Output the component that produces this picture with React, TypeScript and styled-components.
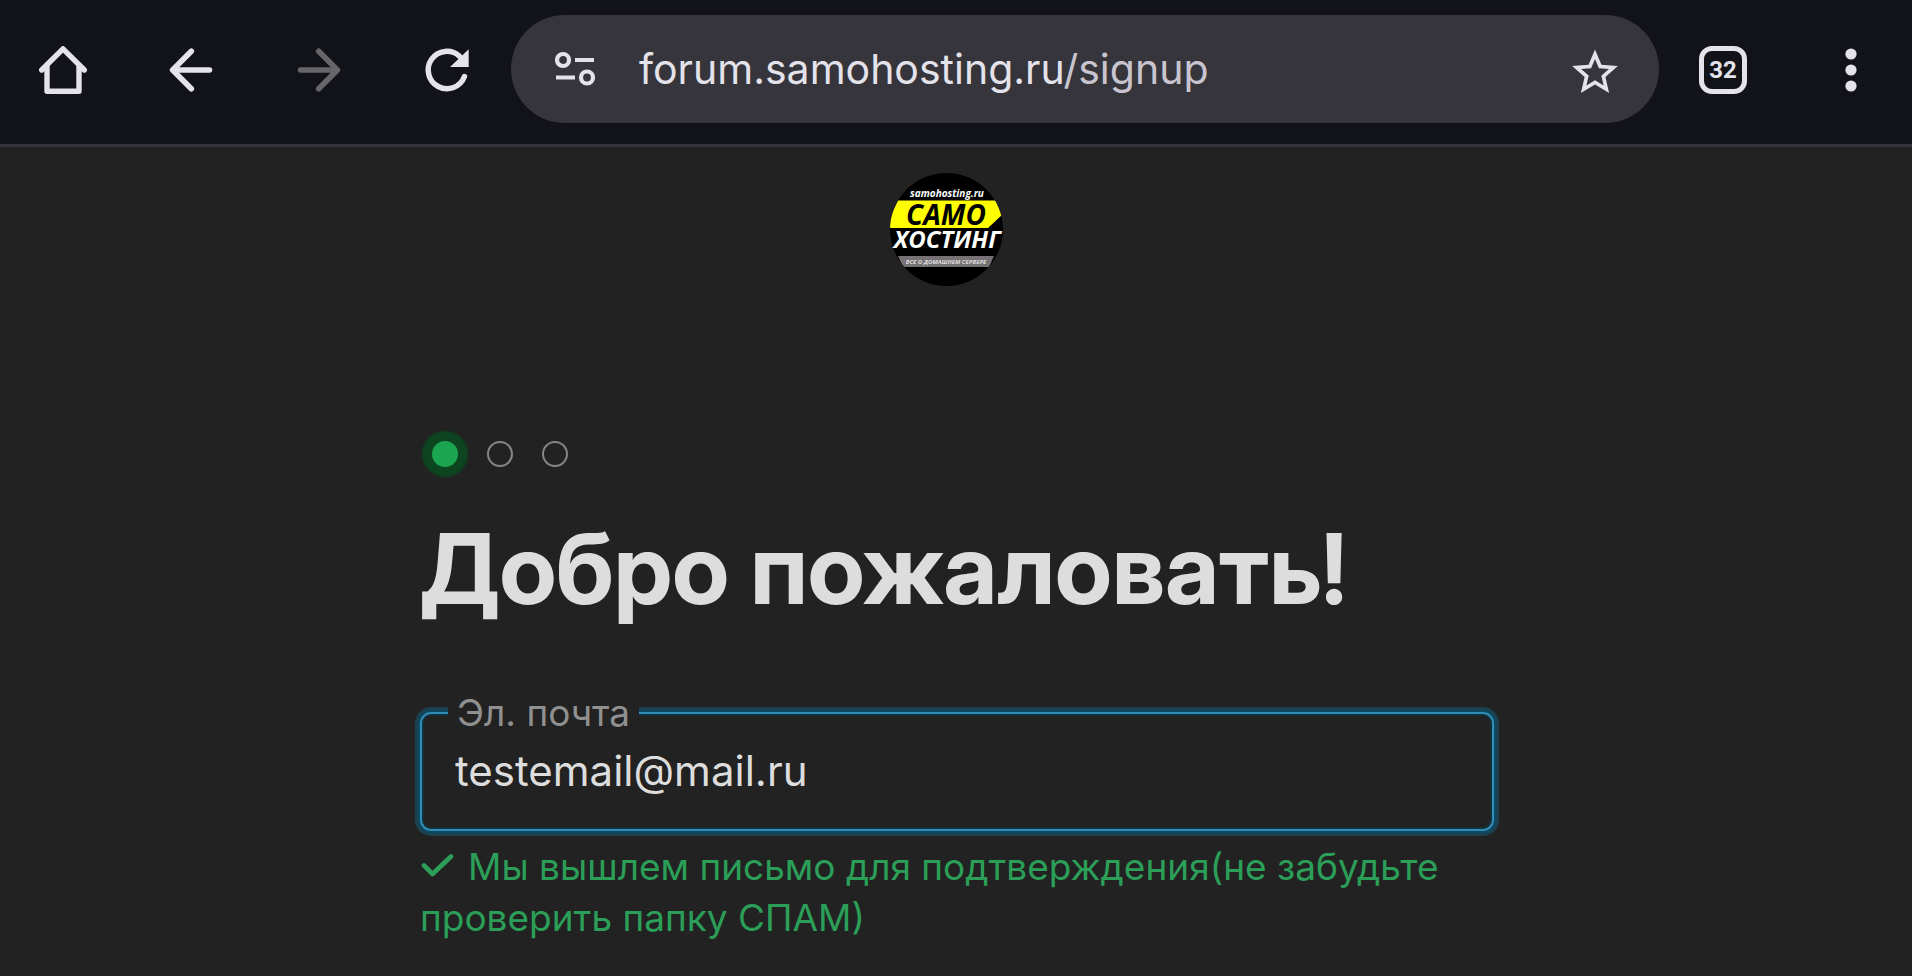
import React, { useState } from "react";
import styled, { createGlobalStyle } from "styled-components";

const color = {
  chrome: "#121318",
  pill: "#36353b",
  icon: "#e4e2ea",
  iconOff: "#65656a",
  urlPath: "#c8c5d0",
  page: "#222222",
  text: "#dddddd",
  muted: "#909090",
  green: "#1ca551",
  greenGlow: "#0d4520",
  focus: "#308fb8",
};

const GlobalStyle = createGlobalStyle`
  * { box-sizing: border-box; }
  body {
    margin: 0;
    background: ${color.page};
    color: ${color.text};
    font-family: Inter, "Liberation Sans", sans-serif;
  }
`;

const Toolbar = styled.header`
  display: flex;
  align-items: center;
  gap: 40px;
  padding: 15px 37px 21px 39px;
  background: ${color.chrome};
  border-bottom: 3px solid ${color.pill};
`;

const ToolGroup = styled.div`
  display: flex;
  align-items: center;
  gap: 80px;
  padding-top: 2px;
`;

const IconButton = styled.button`
  display: flex;
  align-items: center;
  justify-content: center;
  width: 48px;
  height: 48px;
  padding: 0;
  border: 0;
  background: none;
  color: ${color.icon};
  cursor: pointer;

  &:disabled {
    color: ${color.iconOff};
    cursor: default;
  }
`;

const TabsButton = styled(IconButton)`
  border: 5px solid ${color.icon};
  border-radius: 13px;
  font: 700 24px/24px Roboto, sans-serif;
`;

const AddressBar = styled.div`
  display: flex;
  flex: 1;
  align-items: center;
  gap: 44px;
  height: 108px;
  padding: 0 41px 0 44px;
  border-radius: 54px;
  background: ${color.pill};
`;

const PillButton = styled(IconButton)<{ $width: number }>`
  width: ${(p) => p.$width}px;
`;

const Address = styled.div`
  flex: 1;
  color: ${color.icon};
  font-size: 41px;
  line-height: 52px;
  white-space: nowrap;
  outline: none;
`;

const AddressPath = styled.span`
  color: ${color.urlPath};
`;

const SiteHeader = styled.div`
  display: flex;
  justify-content: center;
  padding: 26px 19px 0 0;
`;

const LogoLink = styled.a`
  display: block;
  height: 113px;
`;

const Main = styled.main`
  width: 100%;
  max-width: 1076px;
  margin: 0 auto;
  padding: 155px 0 0 2px;
`;

const Steps = styled.ol`
  display: flex;
  gap: 29px;
  margin: 0;
  padding: 0 12px;
  list-style: none;
`;

const Step = styled.li<{ $active?: boolean }>`
  width: 26px;
  height: 26px;
  border-radius: 50%;
  border: 2px solid ${(p) => (p.$active ? color.green : "#858585")};
  background: ${(p) => (p.$active ? color.green : "transparent")};
  box-shadow: ${(p) => (p.$active ? `0 0 2px 10px ${color.greenGlow}` : "none")};
`;

const Title = styled.h1`
  margin: 42px 0 83px;
  font-family: "Inter Display", Inter, sans-serif;
  font-size: 98px;
  line-height: 120px;
  font-weight: 700;
`;

const Field = styled.div`
  position: relative;
`;

const Label = styled.label`
  position: absolute;
  top: -17px;
  left: 28px;
  padding: 0 9px;
  background: ${color.page};
  color: ${color.muted};
  font-size: 37px;
  line-height: 36px;
`;

const EmailInput = styled.input`
  display: block;
  width: 100%;
  height: 119px;
  padding: 0 33px 2px;
  border: 2px solid ${color.focus};
  border-radius: 11px;
  outline: none;
  background: transparent;
  box-shadow: 0 0 0 2px #0d4a66, 0 0 0 5px #1c404e, inset 0 0 0 2px #163039;
  color: ${color.text};
  font: 400 42px/52px Inter, sans-serif;
`;

const Hint = styled.p`
  margin: 10px 0 0;
  color: #2b9f58;
  font-size: 37px;
  line-height: 51px;
`;

const CheckIcon = styled.svg`
  margin-right: 14px;
`;

const HomeIcon = () => (
  <svg width="48" height="48" viewBox="0 0 48 48" fill="none" stroke="currentColor" strokeWidth="5.4" strokeLinecap="round" strokeLinejoin="round">
    <path d="M2.7 24 24 2.8 45.3 24" />
    <path d="M8 20V45.3H40V20" />
  </svg>
);

const ArrowIcon = ({ forward = false }: { forward?: boolean }) => (
  <svg width="48" height="48" viewBox="0 0 48 48" fill="none" stroke="currentColor" strokeWidth="5.6" strokeLinecap="round" strokeLinejoin="round">
    <path d={forward ? "M23.7 5.3 42.4 24 23.7 42.7M5.5 24H42" : "M24.3 5.3 5.6 24 24.3 42.7M42.5 24H6"} />
  </svg>
);

const ReloadIcon = () => (
  <svg width="48" height="48" viewBox="0 0 48 48">
    <path d="M41.4 30.6A18.7 18.7 0 1 1 36.5 10.2" fill="none" stroke="currentColor" strokeWidth="5.5" strokeLinecap="round" />
    <path d="M45.7 3.3V21H27Z" fill="currentColor" />
  </svg>
);

const SiteInfoIcon = () => (
  <svg width="40" height="36" viewBox="0 0 40 36" fill="none" stroke="currentColor" strokeWidth="4.2">
    <circle cx="8" cy="9" r="6" />
    <path d="M20 9H39M1 26.5H20" />
    <circle cx="32" cy="26.5" r="6" />
  </svg>
);

const StarIcon = () => (
  <svg width="46" height="48" viewBox="2 0 20 21" fill="currentColor">
    <path d="M22 9.24l-7.19-.62L12 2 9.19 8.63 2 9.24l5.46 4.73L5.82 21 12 17.27 18.18 21l-1.63-7.03L22 9.24zM12 15.4l-3.76 2.27 1-4.28-3.32-2.88 4.38-.38L12 6.1l1.71 4.04 4.38.38-3.32 2.88 1 4.28L12 15.4z" />
  </svg>
);

const MenuIcon = () => (
  <svg width="48" height="48" viewBox="0 0 48 48" fill="currentColor">
    <circle cx="24" cy="8" r="5.6" />
    <circle cx="24" cy="24" r="5.6" />
    <circle cx="24" cy="40" r="5.6" />
  </svg>
);

const Logo = () => (
  <svg width="113" height="113" viewBox="0 0 113 113" fontFamily='"Open Sans", sans-serif' fontStyle="italic" fontWeight="700" textAnchor="middle">
    <clipPath id="disc"><circle cx="56.5" cy="56.5" r="56.5" /></clipPath>
    <g clipPath="url(#disc)">
      <rect width="113" height="113" fill="#000" />
      <path d="M8 27.5H109L113 41 98 55H0V44Z" fill="#ffff00" />
      <path d="M8 83H104L99 94H13Z" fill="#767174" />
    </g>
    <text x="57" y="24" fontSize="10" fill="#fff">samohosting.ru</text>
    <text x="56" y="52" fontSize="28" fill="#000">САМО</text>
    <text x="57" y="75" fontSize="24" fill="#fff">ХОСТИНГ</text>
    <text x="56" y="91" fontSize="6" fill="#ddd">ВСЕ О ДОМАШНЕМ СЕРВЕРЕ</text>
  </svg>
);

export default function App() {
  const [email, setEmail] = useState("testemail@mail.ru");

  return (
    <>
      <GlobalStyle />
      <Toolbar>
        <ToolGroup>
          <IconButton aria-label="Домой"><HomeIcon /></IconButton>
          <IconButton aria-label="Назад"><ArrowIcon /></IconButton>
          <IconButton aria-label="Вперёд" disabled><ArrowIcon forward /></IconButton>
          <IconButton aria-label="Обновить"><ReloadIcon /></IconButton>
        </ToolGroup>
        <AddressBar>
          <PillButton $width={40} aria-label="Сведения о сайте"><SiteInfoIcon /></PillButton>
          <Address role="textbox" aria-label="Адрес" contentEditable suppressContentEditableWarning spellCheck={false}>
            forum.samohosting.ru<AddressPath>/signup</AddressPath>
          </Address>
          <PillButton $width={46} aria-label="В закладки"><StarIcon /></PillButton>
        </AddressBar>
        <ToolGroup>
          <TabsButton aria-label="Вкладки: 32">32</TabsButton>
          <IconButton aria-label="Меню"><MenuIcon /></IconButton>
        </ToolGroup>
      </Toolbar>
      <SiteHeader>
        <LogoLink href="/" aria-label="Самохостинг"><Logo /></LogoLink>
      </SiteHeader>
      <Main>
        <Steps>
          <Step $active aria-current="step" />
          <Step />
          <Step />
        </Steps>
        <Title>Добро пожаловать!</Title>
        <form>
          <Field>
            <EmailInput id="email" type="email" spellCheck={false} value={email} onChange={(e) => setEmail(e.target.value)} aria-describedby="email-hint" />
            <Label htmlFor="email">Эл. почта</Label>
          </Field>
          <Hint id="email-hint">
            <CheckIcon width="34" height="27" viewBox="0 0 34 27" fill="none" stroke="currentColor" strokeWidth="4.6" strokeLinecap="round" strokeLinejoin="round" aria-hidden="true">
              <path d="M4 12.5 12.5 21 31 3.5" />
            </CheckIcon>
            Мы вышлем письмо для подтверждения(не забудьте проверить папку СПАМ)
          </Hint>
        </form>
      </Main>
    </>
  );
}
